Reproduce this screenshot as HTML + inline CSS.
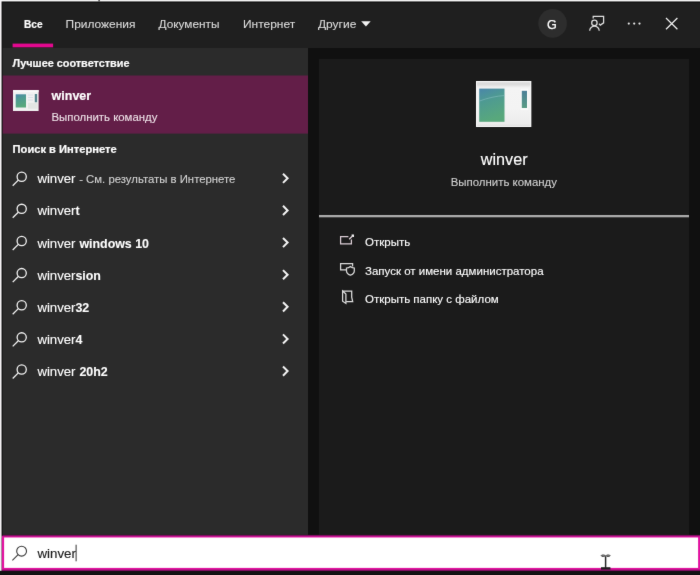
<!DOCTYPE html>
<html lang="ru">
<head>
<meta charset="utf-8">
<title>Поиск — winver</title>
<style>
*{margin:0;padding:0;box-sizing:border-box}
html,body{width:700px;height:575px;overflow:hidden;background:#121212}
body{position:relative;font-family:"Liberation Sans",sans-serif;color:#fff;font-size:13px}
.abs{position:absolute}
#stage{left:-10px;top:-10px;width:720px;height:595px;overflow:hidden;background:#121212;filter:url(#soft);}
#inner{left:10px;top:10px;width:700px;height:575px}
#tabs{left:0;top:0;width:710px;height:48px;background:#1f1f1f}
#gap{left:0;top:48px;width:710px;height:540px;background:#101010}
#left{left:0;top:48px;width:308px;height:490px;background:#2b2b2b}
#right{left:319px;top:59px;width:370px;height:480px;background:#1b1b1b}
.tx{position:absolute;line-height:24px;height:24px;white-space:nowrap;transform-origin:0 50%}
.tx b{font-weight:bold;display:inline-block;transform:scaleX(.94);transform-origin:0 50%;-webkit-text-stroke:.1px #fff}
.tx small{font-size:11.35px;color:#d4d4d4;-webkit-text-stroke:.1px #d4d4d4}
svg{position:absolute;left:0;top:0;overflow:visible}
</style>
</head>
<body>
<svg width="0" height="0" style="position:absolute"><filter id="soft" x="0" y="0" width="100%" height="100%" color-interpolation-filters="sRGB"><feConvolveMatrix order="3" kernelMatrix="0.01 0.055 0.01 0.055 0.74 0.055 0.01 0.055 0.01" edgeMode="duplicate" preserveAlpha="true"/></filter></svg>
<div id="stage" class="abs"><div id="inner" class="abs">
<div id="tabs" class="abs"></div>
<div id="gap" class="abs"></div>
<div id="left" class="abs"></div>
<div id="right" class="abs"></div>
<svg id="bg" width="700" height="575" viewBox="0 0 700 575">
  <!-- selected tab underline -->
  <rect x="12.6" y="43.6" width="40.5" height="3.7" fill="#e3088f"/>
  <!-- best match highlight -->
  <rect x="0" y="75.5" width="308" height="58.1" fill="#631e48"/>
  <!-- separator -->
  <rect x="319" y="215.0" width="370" height="2.3" fill="#ababab"/>
  <!-- search box -->
  <defs><linearGradient id="pk" x1="0" y1="0" x2="0" y2="1"><stop offset="0" stop-color="#3a0a2c"/><stop offset=".03" stop-color="#a81080"/><stop offset=".06" stop-color="#e212a0"/><stop offset=".93" stop-color="#e212a0"/><stop offset=".965" stop-color="#a01078"/><stop offset="1" stop-color="#300824"/></linearGradient></defs>
  <rect x="1.7" y="534.8" width="712" height="36.600" fill="url(#pk)"/>
  <rect x="4.1" y="537.5" width="694" height="30.400" fill="#fff"/>
  <!-- bottom strip -->
  <rect x="-10" y="571.4" width="720" height="16" fill="#121212"/>
  <!-- window edges -->
  <rect x="-10" y="-10" width="720" height="12.7" fill="#0c0c0c"/>
  <rect x="-10" y="-10" width="12.7" height="545.6" fill="#101010"/>
  <rect x="-10" y="-10" width="720" height="11.45" fill="#f5f5f5"/>
  <rect x="-10" y="-10" width="11.55" height="580.8" fill="#f5f2f4"/>
  <rect x="98.4" y="-10" width="1.4" height="11.6" fill="#444"/>
</svg>
<div class="tx" style="left:24px;top:12px;font-size:11px;color:#fff;font-weight:bold;-webkit-text-stroke:.2px #fff;transform:translate(0.00px,0.00px) scaleX(0.92)">Все</div>
<div class="tx" style="left:65px;top:12px;font-size:11.4px;color:#dcdcdc;-webkit-text-stroke:0.1px #dcdcdc;transform:translate(0.60px,0.00px) scaleX(1.047)">Приложения</div>
<div class="tx" style="left:158px;top:12px;font-size:11.4px;color:#dcdcdc;-webkit-text-stroke:0.1px #dcdcdc;transform:translate(0.50px,0.00px) scaleX(1.037)">Документы</div>
<div class="tx" style="left:243px;top:12px;font-size:11.4px;color:#dcdcdc;-webkit-text-stroke:0.1px #dcdcdc;transform:translate(0.00px,0.00px) scaleX(1.05)">Интернет</div>
<div class="tx" style="left:318px;top:12px;font-size:11.4px;color:#dcdcdc;-webkit-text-stroke:0.1px #dcdcdc;transform:translate(0.00px,0.00px) scaleX(1.05)">Другие</div>
<div class="tx" style="left:12px;top:51px;font-size:11px;color:#fff;font-weight:bold;-webkit-text-stroke:.2px #fff;transform:translate(0.60px,0.00px) scaleX(0.988)">Лучшее соответствие</div>
<div class="tx" style="left:12px;top:137px;font-size:11px;color:#fff;font-weight:bold;-webkit-text-stroke:.2px #fff;transform:translate(0.60px,0.00px) scaleX(1.012)">Поиск в Интернете</div>
<div class="tx" style="left:51px;top:84px;font-size:13.5px;color:#fff;font-weight:bold;-webkit-text-stroke:.2px #fff;transform:translate(0.60px,0.00px) scaleX(0.925)">winver</div>
<div class="tx" style="left:51px;top:105px;font-size:11.4px;color:#eee2e8;-webkit-text-stroke:0.1px #eee2e8;transform:translate(0.50px,0.00px) scaleX(1.0)">Выполнить команду</div>
<div class="tx" style="left:37px;top:167px;font-size:13.2px;color:#fff;-webkit-text-stroke:0.12px #fff;transform:translate(0.40px,0.00px) scaleX(1.0)">winver <small>- См. результаты в Интернете</small></div>
<div class="tx" style="left:37px;top:199px;font-size:13.2px;color:#fff;-webkit-text-stroke:0.12px #fff;transform:translate(0.40px,0.00px) scaleX(1.0)">winver<b>t</b></div>
<div class="tx" style="left:37px;top:232px;font-size:13.2px;color:#fff;-webkit-text-stroke:0.12px #fff;transform:translate(0.40px,0.00px) scaleX(1.0)">winver&nbsp;<b>windows 10</b></div>
<div class="tx" style="left:37px;top:264px;font-size:13.2px;color:#fff;-webkit-text-stroke:0.12px #fff;transform:translate(0.40px,0.00px) scaleX(1.0)">winver<b>sion</b></div>
<div class="tx" style="left:37px;top:296px;font-size:13.2px;color:#fff;-webkit-text-stroke:0.12px #fff;transform:translate(0.40px,0.00px) scaleX(1.0)">winver<b>32</b></div>
<div class="tx" style="left:37px;top:328px;font-size:13.2px;color:#fff;-webkit-text-stroke:0.12px #fff;transform:translate(0.40px,0.00px) scaleX(1.0)">winver<b>4</b></div>
<div class="tx" style="left:37px;top:360px;font-size:13.2px;color:#fff;-webkit-text-stroke:0.12px #fff;transform:translate(0.40px,0.00px) scaleX(1.0)">winver&nbsp;<b>20h2</b></div>
<div class="tx" style="left:504px;top:147px;font-size:16.2px;color:#fff;-webkit-text-stroke:0.15px #fff;width:0;height:24px;transform:translate(0.20px,0.00px)"><span style="position:absolute;left:0;top:0;transform:translateX(-50%) scaleX(1.0);white-space:nowrap">winver</span></div>
<div class="tx" style="left:503px;top:170px;font-size:11.45px;color:#d2d2d2;-webkit-text-stroke:0.1px #d2d2d2;width:0;height:24px;transform:translate(0.80px,0.00px)"><span style="position:absolute;left:0;top:0;transform:translateX(-50%) scaleX(1.0);white-space:nowrap">Выполнить команду</span></div>
<div class="tx" style="left:365px;top:230px;font-size:11.5px;color:#fff;-webkit-text-stroke:0.12px #fff;transform:translate(0.00px,0.00px) scaleX(1.0)">Открыть</div>
<div class="tx" style="left:365px;top:259px;font-size:11.5px;color:#fff;-webkit-text-stroke:0.12px #fff;transform:translate(0.00px,0.00px) scaleX(1.0)">Запуск от имени администратора</div>
<div class="tx" style="left:365px;top:287px;font-size:11.5px;color:#fff;-webkit-text-stroke:0.12px #fff;transform:translate(0.00px,0.00px) scaleX(1.0)">Открыть папку с файлом</div>
<div class="tx" style="left:37px;top:542px;font-size:13.3px;color:#1c1c1c;-webkit-text-stroke:0.15px #1c1c1c;transform:translate(0.50px,0.00px) scaleX(1.0)">winver</div>
<svg id="icons" width="700" height="575" viewBox="0 0 700 575" fill="none">
  <!-- dropdown triangle -->
  <path d="M361.2 21.2h9.5l-4.75 5.3z" fill="#f2f2f2"/>
  <!-- avatar -->
  <circle cx="552.6" cy="23.4" r="14.3" fill="#2d2d2d"/>
  <text x="552" y="28.7" text-anchor="middle" font-family="Liberation Sans, sans-serif" font-size="12.6" fill="#fff" stroke="#fff" stroke-width=".25">G</text>
  <!-- feedback -->
  <g stroke="#e0e0e0" stroke-width="1.25">
    <path d="M593.2 18.6v-2.2h10.4v6.4l-3.3 2.3-1.3-1.3"/>
    <circle cx="594.4" cy="22.9" r="2.7"/>
    <path d="M589.7 30.8a4.75 4.75 0 0 1 9.5 0"/>
  </g>
  <!-- more -->
  <g fill="#e6e6e6"><circle cx="628.8" cy="23.6" r="1.1"/><circle cx="634.2" cy="23.6" r="1.1"/><circle cx="639.5" cy="23.6" r="1.1"/></g>
  <!-- close -->
  <path d="M666 18l11.4 11.2M677.4 18L666 29.2" stroke="#f0f0f0" stroke-width="1.2"/>
  <!-- best match icon -->
  <g>
    <rect x="13" y="90" width="25.600" height="21" fill="#f1f1f1"/>
    <rect x="13" y="90" width="25.600" height="2.200" fill="#f8f8f8"/>
    <rect x="15.700" y="94.300" width="10.300" height="13.200" fill="url(#g1)"/>
    <rect x="34.800" y="94" width="2.300" height="8.300" fill="#52848c"/>
    <rect x="28" y="102.800" width="9.400" height="6" fill="#e3e5e3"/>
    <path d="M28 95h5M28 97.500h5M28 100h5" stroke="#d4dae4" stroke-width=".8"/>
  </g>
  <!-- preview icon -->
  <defs>
    <linearGradient id="g1" x1="0" y1="0" x2=".3" y2="1"><stop offset="0" stop-color="#4a86aa"/><stop offset=".4" stop-color="#4e9a92"/><stop offset="1" stop-color="#58a87c"/></linearGradient>
    <linearGradient id="g2" x1="0" y1="0" x2="0" y2="1"><stop offset="0" stop-color="#4a7f98"/><stop offset="1" stop-color="#5a9c84"/></linearGradient>
    <linearGradient id="g3" x1="0" y1="0" x2="0" y2="1"><stop offset="0" stop-color="#e4e4e4"/><stop offset=".07" stop-color="#dadada"/><stop offset=".15" stop-color="#f4f4f4"/><stop offset=".6" stop-color="#f3f3f3"/><stop offset=".93" stop-color="#ececec"/><stop offset="1" stop-color="#dcdcdc"/></linearGradient>
  </defs>
  <rect x="476" y="81" width="55.200" height="46" fill="url(#g3)"/>
  <rect x="476.500" y="81.500" width="54.200" height="45" fill="none" stroke="#fbfbfb" stroke-width="1"/>
  <rect x="479.200" y="88.600" width="25.300" height="33.200" fill="url(#g1)"/>
  <path d="M479.500 101c8-3 17-5 25-5.500" stroke="#8fc4c8" stroke-opacity=".5" stroke-width="1" fill="none"/>
  <rect x="520.600" y="88.800" width="7.600" height="21.200" fill="#fbfbfb"/>
  <rect x="521.800" y="90.800" width="5.200" height="17.200" fill="url(#g2)"/>
  <!-- list search icons + chevrons -->
  <g id="rows" stroke="#f2f2f2">
    <circle cx="21.7" cy="176.70" r="4.6" stroke-width="1.3"/><path d="M18.3 180.10l-5.6 5.6" stroke-width="1.3"/>
  <path d="M283 173.70l4.6 4.6-4.6 4.6" stroke-width="2"/>
  <circle cx="21.7" cy="208.83" r="4.6" stroke-width="1.3"/><path d="M18.3 212.23l-5.6 5.6" stroke-width="1.3"/>
  <path d="M283 205.83l4.6 4.6-4.6 4.6" stroke-width="2"/>
  <circle cx="21.7" cy="240.96" r="4.6" stroke-width="1.3"/><path d="M18.3 244.36l-5.6 5.6" stroke-width="1.3"/>
  <path d="M283 237.96l4.6 4.6-4.6 4.6" stroke-width="2"/>
  <circle cx="21.7" cy="273.09" r="4.6" stroke-width="1.3"/><path d="M18.3 276.49l-5.6 5.6" stroke-width="1.3"/>
  <path d="M283 270.09l4.6 4.6-4.6 4.6" stroke-width="2"/>
  <circle cx="21.7" cy="305.22" r="4.6" stroke-width="1.3"/><path d="M18.3 308.62l-5.6 5.6" stroke-width="1.3"/>
  <path d="M283 302.22l4.6 4.6-4.6 4.6" stroke-width="2"/>
  <circle cx="21.7" cy="337.35" r="4.6" stroke-width="1.3"/><path d="M18.3 340.75l-5.6 5.6" stroke-width="1.3"/>
  <path d="M283 334.35l4.6 4.6-4.6 4.6" stroke-width="2"/>
  <circle cx="21.7" cy="369.48" r="4.6" stroke-width="1.3"/><path d="M18.3 372.88l-5.6 5.6" stroke-width="1.3"/>
  <path d="M283 366.48l4.6 4.6-4.6 4.6" stroke-width="2"/>
  </g>
  <!-- action icons -->
  <g stroke="#dccdd6" stroke-width="1.25">
    <path d="M348.4 236.6h-7.8v7.2h10.8v-4.4"/>
    <path d="M349.2 239.2l3.8-3.7" stroke="#e8dce2"/>
    <path d="M351.6 235.2h1.7v1.7" stroke="#fff"/>
  </g>
  <g stroke="#dadada" stroke-width="1.25">
    <path d="M346 269.800h-5.400v-6.200h12v2.800"/>
    <path d="M350.400 266.500c1.200 1 2.500 1.400 3.900 1.500v3c0 1.800-1.500 3.300-3.900 4.200-2.400-.9-3.900-2.400-3.900-4.200v-3c1.400-.1 2.700-.5 3.900-1.500z"/>
  </g>
  <g stroke="#dedede" stroke-width="1.25">
    <path d="M342.600 291h9.100v6.200l1 4.400h-6.600"/>
    <path d="M342.600 291v10.200l3.300 2.200v-9.400z"/>
  </g>
  <!-- search box icon -->
  <g stroke="#3a3a3a" stroke-width="1.1">
    <circle cx="21.600" cy="551.200" r="4.900"/>
    <path d="M18.100 554.700l-5.700 5.600"/>
  </g>
  <!-- caret -->
  <rect x="75.600" y="544.700" width="1" height="16.600" fill="#333"/>
  <!-- mouse I-beam -->
  <g stroke="#262626">
    <path d="M605.600 556.200v11.600" stroke-width="1.500"/>
    <ellipse cx="603.200" cy="555.700" rx="2" ry=".700" fill="#c8c8c8" stroke-width=".9"/>
    <ellipse cx="608.100" cy="555.700" rx="2" ry=".700" fill="#c8c8c8" stroke-width=".9"/>
    <path d="M601 568.400h9.400" stroke="#1c1c1c" stroke-width="2.400"/>
  </g>
</svg>
</div></div>
</body>
</html>
